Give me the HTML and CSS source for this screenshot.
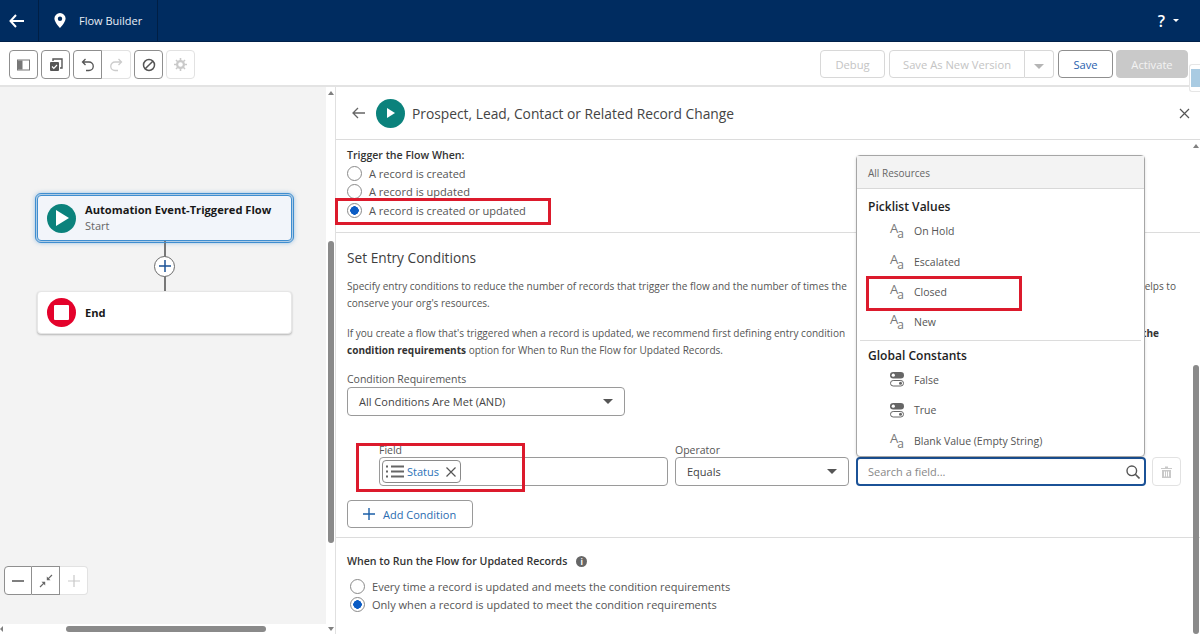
FILE: index.html
```html
<!DOCTYPE html>
<html lang="en">
<head>
    <meta charset="UTF-8">
    <title>Flow Builder</title>
    <link rel="stylesheet" href="styles.css">
</head>
<body>
    <header class="topbar">
        <div class="topbar-back">
            <svg width="15" height="14" viewBox="0 0 15 14"><path d="M7 1 1.500 7 7 13M1.500 7H15" fill="none" stroke="#fff" stroke-width="2"/></svg>
        </div>
        <div class="topbar-title">
            <svg width="12" height="15" viewBox="0 0 12 15"><path fill-rule="evenodd" d="M6 0a5.6 5.6 0 0 0-5.6 5.6C.4 9.4 6 15 6 15s5.600-5.600 5.600-9.400A5.600 5.600 0 0 0 6 0zm0 3.500a2.200 2.200 0 1 1 0 4.400 2.200 2.200 0 0 1 0-4.400z" fill="#fff"/></svg>
            <span>Flow Builder</span>
        </div>
        <div class="topbar-help">
            <span>?</span>
            <i class="caret-small"></i>
        </div>
    </header>

    <div class="toolbar">
        <button class="tool">
            <svg width="14" height="12" viewBox="0 0 14 12"><rect x=".5" y="1" width="12" height="10" fill="none" stroke="#777"/><rect x="1" y="1.500" width="4.500" height="9" fill="#777"/></svg>
        </button>
        <button class="tool">
            <svg width="14" height="14" viewBox="0 0 14 14"><path d="M4 3V1h9v9h-2" fill="none" stroke="#555" stroke-width="1.400"/><rect x="1" y="4" width="9" height="9" rx="1" fill="#555"/><path d="m3 8.500 1.800 1.800L8 7" fill="none" stroke="#fff" stroke-width="1.200"/></svg>
        </button>
        <div class="tool-group">
            <button class="tool tool-left">
                <svg width="14" height="14" viewBox="0 0 14 14"><path d="M4.500 1 1.500 4l3 3M1.500 4H8a4 4 0 0 1 0 8.500H5" fill="none" stroke="#555" stroke-width="1.300"/></svg>
            </button>
            <button class="tool tool-right tool-off">
                <svg width="14" height="14" viewBox="0 0 14 14"><path d="m9.500 1 3 3-3 3M12.500 4H6a4 4 0 0 0 0 8.500h3" fill="none" stroke="#ccc" stroke-width="1.300"/></svg>
            </button>
        </div>
        <button class="tool">
            <svg width="14" height="14" viewBox="0 0 14 14"><circle cx="7" cy="7" r="5.500" fill="none" stroke="#555" stroke-width="1.500"/><path d="M3.200 10.800 10.800 3.200" stroke="#555" stroke-width="1.500"/></svg>
        </button>
        <button class="tool tool-off">
            <svg width="13" height="13" viewBox="0 0 13 13"><circle cx="6.500" cy="6.500" r="3.400" fill="none" stroke="#c9c9c9" stroke-width="2.200"/><path d="M6.500 0v2.500M6.500 10.500V13M0 6.500h2.500M10.500 6.500H13M2 2l1.700 1.700M9.300 9.300 11 11M2 11l1.700-1.700M9.300 3.700 11 2" stroke="#c9c9c9" stroke-width="1.600"/></svg>
        </button>
        <div class="toolbar-actions">
            <button class="action action-off action-debug">Debug</button>
            <div class="split">
                <button class="action action-off split-main">Save As New Version</button>
                <button class="action action-off split-arrow"><i class="caret"></i></button>
            </div>
            <button class="action action-save">Save</button>
            <button class="action action-activate">Activate</button>
        </div>
    </div>

    <main class="workspace">
        <section class="canvas">
            <div class="canvas-area">
                <div class="flow">
                    <div class="node node-start">
                        <span class="node-icon node-icon-green"><svg width="16" height="18" viewBox="0 0 16 18"><path d="M2 1v16l13-8z" fill="#fff"/></svg></span>
                        <div>
                            <div class="node-name">Automation Event-Triggered Flow</div>
                            <div class="node-type">Start</div>
                        </div>
                    </div>
                    <div class="connector">
                        <span class="connector-plus"><svg width="14" height="14" viewBox="0 0 14 14"><path d="M7 1v12M1 7h12" stroke="#1b5297" stroke-width="1.500"/></svg></span>
                    </div>
                    <div class="node node-end">
                        <span class="node-icon node-icon-red"><i></i></span>
                        <div class="node-name">End</div>
                    </div>
                </div>
                <div class="zoom-controls">
                    <button class="zoom-btn"><svg width="12" height="2" viewBox="0 0 12 2"><path d="M0 1h12" stroke="#555" stroke-width="1.500"/></svg></button>
                    <button class="zoom-btn"><svg width="14" height="14" viewBox="0 0 14 14"><path d="M13 1 8.800 5.200M1 13l4.200-4.200" stroke="#666" stroke-width="1.200"/><path d="M7.800 2.500v3.700h3.700zM6.200 11.500V7.800H2.500z" fill="#666"/></svg></button>
                    <button class="zoom-btn zoom-off"><svg width="12" height="12" viewBox="0 0 12 12"><path d="M6 0v12M0 6h12" stroke="#c9c9c9" stroke-width="1.200"/></svg></button>
                </div>
            </div>
            <div class="canvas-hscroll"><i class="arrow-left"></i><i class="thumb-h"></i></div>
            <div class="canvas-vscroll"><i class="arrow-up"></i><i class="thumb-v"></i><i class="arrow-down"></i></div>
        </section>

        <section class="panel">
            <div class="panel-head">
                <svg width="14" height="12" viewBox="0 0 14 12"><path d="M6 1 1 6l5 5M1 6h12" fill="none" stroke="#666" stroke-width="1.300"/></svg>
                <span class="panel-icon"><svg width="10" height="12" viewBox="0 0 10 12"><path d="M1 1v10l8-5z" fill="#fff"/></svg></span>
                <h1>Prospect, Lead, Contact or Related Record Change</h1>
                <svg class="panel-close" width="11" height="11" viewBox="0 0 11 11"><path d="m1 1 9 9M10 1l-9 9" stroke="#555" stroke-width="1.200"/></svg>
            </div>

            <div class="panel-body">
                <div class="section section-trigger">
                    <div class="label-strong">Trigger the Flow When:</div>
                    <label class="radio"><i class="dot"></i>A record is created</label>
                    <label class="radio"><i class="dot"></i>A record is updated</label>
                    <label class="radio"><i class="dot dot-on"></i>A record is created or updated</label>
                </div>

                <div class="section section-entry">
                    <h2>Set Entry Conditions</h2>
                    <div class="help">
                        <div class="help-line"><span>Specify entry conditions to reduce the number of records that trigger the flow and the number of times the</span><span>helps to</span></div>
                        <div class="help-line"><span>conserve your org's resources.</span></div>
                    </div>
                    <div class="help">
                        <div class="help-line help-line-short"><span>If you create a flow that's triggered when a record is updated, we recommend first defining entry condition</span><b>the</b></div>
                        <div class="help-line"><span><b>condition requirements</b> option for When to Run the Flow for Updated Records.</span></div>
                    </div>
                    <div class="field-label">Condition Requirements</div>
                    <div class="select select-req">All Conditions Are Met (AND)<i class="caret caret-dark"></i></div>

                    <div class="condition">
                        <div class="cond-field">
                            <div class="field-label">Field</div>
                            <div class="input input-pill">
                                <span class="pill">
                                    <svg width="18" height="13" viewBox="0 0 18 13"><path d="M5 1.500h13M5 6.500h13M5 11.500h13" stroke="#666" stroke-width="2"/><path d="M0 1.500h2M0 6.500h2M0 11.500h2" stroke="#666" stroke-width="2"/></svg>
                                    <span class="pill-text">Status</span>
                                    <svg width="10" height="10" viewBox="0 0 10 10"><path d="m.5.500 9 9M9.500.500l-9 9" stroke="#555" stroke-width="1.200"/></svg>
                                </span>
                            </div>
                        </div>
                        <div class="cond-op">
                            <div class="field-label">Operator</div>
                            <div class="select">Equals<i class="caret caret-dark"></i></div>
                        </div>
                        <div class="cond-value">
                            <div class="input input-focus">
                                <span>Search a field...</span>
                                <svg width="14" height="14" viewBox="0 0 14 14"><circle cx="5.800" cy="5.800" r="4.800" fill="none" stroke="#555" stroke-width="1.400"/><path d="m9.300 9.300 4.200 4.200" stroke="#555" stroke-width="1.600"/></svg>
                            </div>
                        </div>
                        <button class="tool tool-off trash">
                            <svg width="11" height="12" viewBox="0 0 11 12"><path d="M0 2h11v1H0zM4 .500h3V2H4zM1 4h9v8H1z" fill="#c9c9c9"/><path d="M3.500 5.500v5M5.500 5.500v5M7.500 5.500v5" stroke="#fff"/></svg>
                        </button>
                    </div>

                    <button class="add-btn">
                        <svg width="12" height="12" viewBox="0 0 12 12"><path d="M6 0v12M0 6h12" stroke="#1b5fa8" stroke-width="1.400"/></svg>
                        Add Condition
                    </button>
                </div>

                <div class="section section-run">
                    <div class="label-strong">When to Run the Flow for Updated Records <i class="info">i</i></div>
                    <label class="radio"><i class="dot"></i>Every time a record is updated and meets the condition requirements</label>
                    <label class="radio"><i class="dot dot-on"></i>Only when a record is updated to meet the condition requirements</label>
                </div>
            </div>

            <div class="panel-vscroll"><i class="arrow-up"></i><i class="thumb-v"></i></div>
        </section>

        <div class="dropdown">
            <div class="dropdown-head">All Resources</div>
            <div class="group-title">Picklist Values</div>
            <div class="option"><span class="aa">A<sub>a</sub></span>On Hold</div>
            <div class="option"><span class="aa">A<sub>a</sub></span>Escalated</div>
            <div class="option"><span class="aa">A<sub>a</sub></span>Closed</div>
            <div class="option"><span class="aa">A<sub>a</sub></span>New</div>
            <div class="group-title group-second">Global Constants</div>
            <div class="option">
                <span class="aa"><svg width="14" height="15" viewBox="0 0 14 15"><rect y="0" width="14" height="6.500" rx="3.200" fill="#666"/><circle cx="3.300" cy="3.200" r="1.600" fill="#fff"/><rect x=".5" y="8.500" width="13" height="5.500" rx="2.700" fill="#fff" stroke="#666"/><circle cx="10.500" cy="11.200" r="1.500" fill="#666"/></svg></span>False
            </div>
            <div class="option">
                <span class="aa"><svg width="14" height="15" viewBox="0 0 14 15"><rect y="0" width="14" height="6.500" rx="3.200" fill="#666"/><circle cx="3.300" cy="3.200" r="1.600" fill="#fff"/><rect x=".5" y="8.500" width="13" height="5.500" rx="2.700" fill="#fff" stroke="#666"/><circle cx="10.500" cy="11.200" r="1.500" fill="#666"/></svg></span>True
            </div>
            <div class="option"><span class="aa">A<sub>a</sub></span>Blank Value (Empty String)</div>
        </div>

        <i class="mark mark-radio"></i>
        <i class="mark mark-closed"></i>
        <i class="mark mark-field"></i>
    </main>

    <div class="collapse-tab"><i></i></div>
</body>
</html>
```

FILE: styles.css
```css
* {
    box-sizing: border-box;
}

html, body {
    margin: 0;
    height: 634px;
    overflow: hidden;
}

body {
    background-color: #fff;
    color: #444;
    font-family: "Open Sans", "Noto Sans", Arial, sans-serif;
    font-size: 11px;
    position: relative;
}

button {
    font-family: inherit;
    background-color: #fff;
    padding: 0;
}

i {
    font-style: normal;
}

/* top bar */
.topbar {
    height: 42px;
    background-color: #002c60;
    border-bottom: 1px solid #00204a;
    display: flex;
    align-items: center;
    color: #e8eef6;
}

.topbar-back {
    width: 39px;
    height: 100%;
    padding-left: 9px;
    display: flex;
    align-items: center;
    border-right: 1px solid #001f45;
}

.topbar-title {
    width: 119px;
    height: 100%;
    padding: 0 0 1px 15px;
    display: flex;
    align-items: center;
    gap: 13px;
    border-right: 1px solid #001f45;
    font-size: 11px;
}

.topbar-help {
    margin-left: auto;
    margin-right: 21px;
    display: flex;
    align-items: center;
    gap: 8px;
    color: #fff;
    font-size: 16px;
    font-weight: 600;
}

.caret-small {
    border-left: 3px solid transparent;
    border-right: 3px solid transparent;
    border-top: 3px solid #fff;
}

/* toolbar */
.toolbar {
    height: 45px;
    padding: 8px 12px 0 9px;
    display: flex;
    align-items: flex-start;
    gap: 3px;
    border-bottom: 2px solid #e3e3e3;
}

.tool {
    width: 29px;
    height: 29px;
    border: 1px solid #8f8f8f;
    border-radius: 4px;
    display: flex;
    align-items: center;
    justify-content: center;
}

.tool-off {
    border-color: #e2e2e2;
}

.tool-group {
    display: flex;
}

.tool-left {
    border-radius: 4px 0 0 4px;
}

.tool-right {
    border-left: none;
    border-radius: 0 4px 4px 0;
}

.toolbar-actions {
    margin-left: auto;
    display: flex;
    gap: 5px;
}

.action {
    height: 28px;
    border: 1px solid #d8d8d8;
    border-radius: 4px;
    font-size: 11.200px;
    color: #c4c4c4;
}

.action-debug {
    width: 65px;
    margin-right: -1px;
}

.split {
    display: flex;
}

.split-main {
    width: 136px;
    border-radius: 4px 0 0 4px;
}

.split-arrow {
    width: 29px;
    border-left: none;
    border-radius: 0 4px 4px 0;
}

.action-save {
    width: 55px;
    margin-left: -1px;
    border-color: #8f8f8f;
    color: #2a5fae;
}

.action-activate {
    width: 72px;
    margin-left: -2px;
    border-color: #c9c9c9;
    background-color: #c9c9c9;
    color: #f3f3f3;
}

.caret {
    display: inline-block;
    border-left: 5px solid transparent;
    border-right: 5px solid transparent;
    border-top: 5px solid #b5b5b5;
}

.caret-dark {
    border-top-color: #555;
}

/* main area */
.workspace {
    display: flex;
    height: 547px;
}

.canvas {
    width: 336px;
    height: 100%;
    position: relative;
    border-right: 1px solid #e0e0e0;
    flex-shrink: 0;
}

.canvas-area {
    width: 326px;
    height: 537px;
    background-color: #f3f3f3;
    position: relative;
}

.flow {
    padding: 108px 0 0 37px;
    width: 256px;
    margin-right: auto;
}

.node {
    width: 255px;
    display: flex;
    align-items: center;
    gap: 9px;
    padding-left: 9px;
    background-color: #fff;
    border-radius: 4px;
}

.node-start {
    height: 46px;
    background-color: #f2f5fa;
    border: 1px solid #3f8ed0;
    outline: 1px solid #3f8ed0;
    outline-offset: 1px;
    box-shadow: 0 0 4px 2px rgba(63, 142, 208, 0.5);
}

.node-end {
    height: 43px;
    box-shadow: 0 1px 2px rgba(0, 0, 0, 0.25);
    border: 1px solid #e6e6e6;
}

.node-icon {
    width: 29px;
    height: 29px;
    border-radius: 50%;
    display: flex;
    align-items: center;
    justify-content: center;
    flex-shrink: 0;
}

.node-icon-green {
    background-color: #0b827c;
}

.node-icon-red {
    background-color: #e4022b;
}

.node-icon-red i {
    width: 15px;
    height: 15px;
    background-color: #fff;
    border-radius: 1px;
}

.node-name {
    color: #181818;
    font-weight: 700;
    font-size: 11.150px;
    line-height: 16px;
}

.node-type {
    color: #666;
    font-size: 11px;
    line-height: 16px;
}

.connector {
    width: 255px;
    height: 50px;
    display: flex;
    align-items: center;
    justify-content: center;
    background: linear-gradient(#777, #777) no-repeat center / 2px 100%;
}

.connector-plus {
    width: 21px;
    height: 21px;
    background-color: #fff;
    border: 1px solid #6b6b6b;
    border-radius: 50%;
    display: flex;
    align-items: center;
    justify-content: center;
}

.zoom-controls {
    position: absolute;
    left: 4px;
    top: 479px;
    display: flex;
}

.zoom-btn {
    width: 28px;
    height: 29px;
    border: 1px solid #8f8f8f;
    border-left: none;
    display: flex;
    align-items: center;
    justify-content: center;
}

.zoom-btn:first-child {
    border-left: 1px solid #8f8f8f;
    border-radius: 4px 0 0 4px;
}

.zoom-off {
    border-color: #e2e2e2;
    border-radius: 0 4px 4px 0;
}

.canvas-hscroll {
    height: 10px;
    position: relative;
}

.thumb-h {
    position: absolute;
    left: 66px;
    top: 2px;
    width: 200px;
    height: 6px;
    background-color: #8a8a8a;
    border-radius: 3px;
}

.arrow-left {
    position: absolute;
    left: 0;
    top: 2px;
    border-top: 3px solid transparent;
    border-bottom: 3px solid transparent;
    border-right: 3px solid #808080;
}

.canvas-vscroll {
    position: absolute;
    left: 327px;
    top: 0;
    width: 8px;
    height: 100%;
}

.thumb-v {
    position: absolute;
    left: 1px;
    width: 6px;
    background-color: #8a8a8a;
    border-radius: 3px;
}

.canvas-vscroll .thumb-v {
    top: 154px;
    height: 302px;
}

.arrow-up, .arrow-down {
    position: absolute;
    left: 1px;
    border-left: 3px solid transparent;
    border-right: 3px solid transparent;
}

.arrow-up {
    top: 4px;
    border-bottom: 4px solid #808080;
}

.arrow-down {
    bottom: 3px;
    border-top: 4px solid #808080;
}

/* side panel */
.panel {
    width: 864px;
    min-width: 0;
    height: 100%;
    position: relative;
}

.panel-head {
    height: 53px;
    padding-left: 16px;
    display: flex;
    align-items: center;
    border-bottom: 1px solid #dcdcdc;
}

.panel-icon {
    width: 29px;
    height: 29px;
    margin-left: 10px;
    border-radius: 50%;
    background-color: #0b827c;
    display: flex;
    align-items: center;
    justify-content: center;
}

.panel-head h1 {
    margin: 0 0 0 7px;
    font-size: 13.800px;
    font-weight: 400;
    color: #444;
}

.panel-close {
    margin-left: auto;
    margin-right: 10px;
}

.section {
    padding-left: 11px;
}

.section-trigger {
    height: 93px;
    padding-top: 8px;
    border-bottom: 1px solid #dcdcdc;
}

.section-trigger .label-strong {
    margin-bottom: 2px;
}

.label-strong {
    color: #333;
    font-weight: 600;
    font-size: 10.600px;
    line-height: 14px;
}

.radio {
    display: flex;
    align-items: center;
    gap: 7px;
    height: 18.500px;
    font-size: 11.050px;
    color: #555;
}

.dot {
    width: 15px;
    height: 15px;
    border: 1px solid #8a8a8a;
    border-radius: 50%;
    background-color: #fff;
    flex-shrink: 0;
}

.dot-on {
    background: radial-gradient(circle, #0b5cc4 0 4px, #fff 4.500px);
}

.section-entry {
    height: 305px;
    padding-top: 15px;
    border-bottom: 1px solid #dcdcdc;
}

.section-entry h2 {
    margin: 0 0 10px;
    font-size: 13.700px;
    font-weight: 400;
    line-height: 20px;
    color: #3e3e3e;
}

.help {
    margin: 0 0 13px;
    font-size: 10.050px;
    line-height: 17px;
    color: #555;
}

.help b {
    color: #333;
}

.help-line {
    width: 829px;
    display: flex;
    justify-content: space-between;
    white-space: nowrap;
}

.help-line-short {
    width: 812px;
}

.field-label {
    color: #555;
    font-size: 10.500px;
    line-height: 14px;
    margin-bottom: 1px;
}

.select {
    height: 29px;
    padding: 0 11px;
    display: flex;
    align-items: center;
    justify-content: space-between;
    border: 1px solid #9a9a9a;
    border-radius: 4px;
    color: #444;
    background-color: #fff;
}

.select-req {
    width: 278px;
}

.condition {
    display: flex;
    align-items: flex-end;
    margin-top: 27px;
    padding-left: 32px;
}

.condition .field-label {
    margin-bottom: 0;
}

.cond-field {
    width: 289px;
}

.cond-op {
    width: 174px;
    margin-left: 7px;
}

.cond-value {
    width: 290px;
    margin-left: 7px;
}

.input {
    height: 29px;
    display: flex;
    align-items: center;
    border: 1px solid #9a9a9a;
    border-radius: 4px;
    background-color: #fff;
}

.input-pill {
    padding-left: 2px;
}

.pill {
    height: 23px;
    width: 79px;
    display: flex;
    align-items: center;
    gap: 3px;
    padding: 0 4px 0 3px;
    border: 1px solid #8a8a8a;
    border-radius: 4px;
}

.pill-text {
    color: #2b73b8;
    flex: 1;
}

.input-focus {
    justify-content: space-between;
    padding: 0 4px 0 10px;
    border: 2px solid #1b5297;
    color: #888;
}

.trash {
    margin-left: 6px;
}

.add-btn {
    margin-top: 14px;
    width: 126px;
    height: 28px;
    border: 1px solid #9a9a9a;
    border-radius: 4px;
    display: flex;
    align-items: center;
    gap: 8px;
    padding-left: 15px;
    font-size: 11px;
    color: #2a6cb0;
}

.section-run {
    padding-top: 16px;
}

.section-run .label-strong {
    margin-bottom: 9px;
    display: flex;
    align-items: center;
    gap: 9px;
}

.section-run .radio {
    margin-left: 3px;
}

.info {
    width: 11px;
    height: 11px;
    border-radius: 50%;
    background-color: #666;
    color: #fff;
    font-size: 8px;
    font-weight: 700;
    line-height: 11px;
    text-align: center;
}

.panel-vscroll {
    position: absolute;
    right: 0;
    top: 53px;
    bottom: 0;
    width: 8px;
}

.panel-vscroll .thumb-v {
    top: 225px;
    bottom: 0;
}

/* resource dropdown */
.dropdown {
    position: absolute;
    left: 856px;
    top: 155px;
    width: 289px;
    height: 302px;
    background-color: #fff;
    border: 1px solid #a6a6a6;
    border-radius: 4px;
    box-shadow: 0 1px 3px rgba(0, 0, 0, 0.15);
}

.dropdown-head {
    height: 33px;
    padding: 1px 0 0 11px;
    display: flex;
    align-items: center;
    background-color: #f3f3f3;
    border-bottom: 1px solid #d8d8d8;
    font-size: 10px;
    color: #666;
}

.group-title {
    margin-left: 11px;
    padding-top: 10px;
    height: 27px;
    color: #1e1e1e;
    font-size: 12.050px;
    font-weight: 600;
    line-height: 16px;
}

.group-second {
    margin: 2px 3px 0 3px;
    padding: 7px 0 0 8px;
    height: 25px;
    border-top: 1px solid #dcdcdc;
}

.option {
    height: 30.400px;
    padding-left: 33px;
    display: flex;
    align-items: center;
    color: #555;
    font-size: 10.500px;
}

.aa {
    width: 24px;
    color: #777;
    font-size: 13px;
    line-height: 1;
    display: flex;
    align-items: flex-start;
}

.aa sub {
    font-size: 12px;
    line-height: 1;
    vertical-align: baseline;
    margin-top: 6px;
    margin-left: -1px;
}

/* red annotation boxes */
.mark {
    position: absolute;
    border: 3px solid #dc1a2c;
}

.mark-radio {
    left: 335px;
    top: 198px;
    width: 216px;
    height: 27px;
}

.mark-closed {
    left: 866px;
    top: 276px;
    width: 156px;
    height: 35px;
}

.mark-field {
    left: 356px;
    top: 443px;
    width: 169px;
    height: 49px;
}

.collapse-tab {
    position: absolute;
    left: 1189px;
    top: 64px;
    width: 11px;
    height: 28px;
    background-color: #fff;
    border: 1px solid #e6e6e6;
    border-right: none;
    border-radius: 3px 0 0 3px;
    padding: 4px 0 0 1px;
}

.collapse-tab i {
    display: block;
    width: 9px;
    height: 18px;
    background-color: #a9cbe2;
}
```
